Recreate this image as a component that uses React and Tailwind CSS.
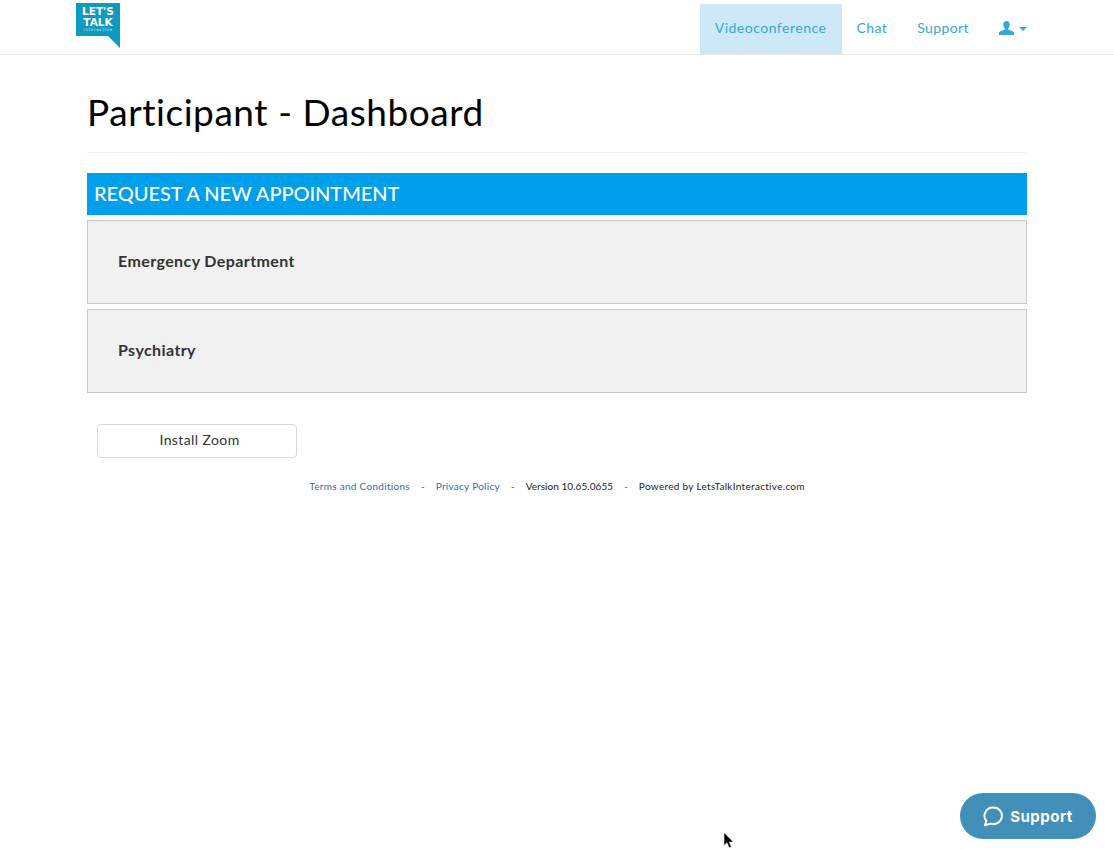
const font = { fontFamily: 'Lato, "Noto Sans", sans-serif' };

function Logo() {
  return (
    <div className="relative w-[44px] h-[45px] mt-[3px] ml-[76px]">
      <svg className="absolute inset-0" width="44" height="45" viewBox="0 0 44 45">
        <path d="M0 0H44V45L32 33H0Z" fill="#0f9abf" />
      </svg>
      <div className="absolute left-0 right-0 top-[3px] flex flex-col items-center text-white font-bold text-[10.500px] leading-[10.500px]" style={{ fontFamily: '"DejaVu Sans", sans-serif' }}>
        <span className="block h-[10.500px]">LET'S</span>
        <span className="block h-[10.500px]">TALK</span>
        <span className="text-[4px] leading-[5px] font-normal tracking-[0.7px] text-[#cfeaf3]">interactive</span>
      </div>
    </div>
  );
}

function Panel({ children }) {
  return (
    <div className="h-[84px] bg-[#f1f1f1] border border-[#c8c8c8] flex items-center pl-[30px] pb-[2px] text-[16px] font-bold tracking-[0.4px] text-[#333333]">
      {children}
    </div>
  );
}

export default function App() {
  return (
    <div className="relative min-h-[849px] bg-white overflow-hidden" style={font}>
      <nav className="h-[55px] border-b border-[#e7e7e7] flex justify-between">
        <Logo />
        <div className="flex items-end pr-[87px] text-[14px] tracking-[0.4px] text-[#36a6dc]">
          <a className="h-[50px] w-[142px] bg-[#cde9f7] flex items-center justify-center pb-[3px] tracking-[0.5px]">Videoconference</a>
          <a className="h-[50px] px-[15px] flex items-center pb-[3px]">Chat</a>
          <a className="h-[50px] px-[15px] flex items-center pb-[3px]">Support</a>
          <a className="h-[50px] pl-[15px] flex items-center gap-[5px]">
            <svg width="15" height="15" viewBox="0 0 15 15" className="mb-[2px]">
              <path d="M7.5 0C5.4 0 4.2 1.5 4.2 3.6c0 1.5.6 2.9 1.6 3.7v1.2L.9 10.6C.2 11 0 11.6 0 12.3V14h15v-1.700c0-.7-.2-1.300-.9-1.700L9.200 8.500V7.300c1-.8 1.600-2.200 1.600-3.700C10.800 1.500 9.600 0 7.500 0Z" fill="#36a6dc" />
            </svg>
            <svg width="8" height="4" viewBox="0 0 8 4">
              <path d="M0 0H8L4 4Z" fill="#36a6dc" />
            </svg>
          </a>
        </div>
      </nav>

      <main className="mx-[87px] w-[940px]">
        <h1 className="h-[98px] pt-[32px] text-[37px] tracking-[0.56px] leading-[50px] text-black border-b border-[#eeeeee]">
          Participant - Dashboard
        </h1>
        <h2 className="mt-[20px] h-[42px] bg-[#009fec] text-white text-[20px] font-medium tracking-[-0.05px] flex items-center pl-[7px] pb-[3px]">
          REQUEST A NEW APPOINTMENT
        </h2>
        <div className="mt-[5px] flex flex-col gap-[5px]">
          <Panel>Emergency Department</Panel>
          <Panel>Psychiatry</Panel>
        </div>
        <button className="mt-[31px] ml-[10px] block w-[200px] h-[34px] rounded-[4px] border border-[#d9d9d9] bg-white text-[14px] tracking-[0.4px] text-[#333333] pl-[5px] pb-[3px]">
          Install Zoom
        </button>
        <footer className="mt-[21px] flex justify-center text-[10px] leading-[14px] text-[#222222]">
          <a className="text-[#1f6fb5] tracking-[0.3px]">Terms and Conditions</a>
          <span className="mx-[11px] text-[#555555]">-</span>
          <a className="text-[#1f6fb5] tracking-[0.28px]">Privacy Policy</a>
          <span className="mx-[11px] text-[#555555]">-</span>
          <span className="tracking-[0.05px]">Version 10.65.0655</span>
          <span className="mx-[11px] text-[#555555]">-</span>
          <span className="tracking-[0.3px]">Powered by LetsTalkInteractive.com</span>
        </footer>
      </main>

      <button className="absolute left-[960px] top-[793px] w-[136px] h-[46px] rounded-full bg-[#428fb9] text-white flex items-center justify-center gap-[7px] text-[15px] font-bold tracking-[0.5px]" style={{ fontFamily: 'Inter, sans-serif' }}>
        <svg width="20" height="21" viewBox="0 0 20 21" fill="none">
          <path d="M10.500 1.500a8.300 8.300 0 1 1-2.700 16.100L1.800 19.300l1.600-4.300A8.300 8.300 0 0 1 10.500 1.500Z" stroke="white" strokeWidth="2" strokeLinejoin="round" />
        </svg>
        <span className="pt-[2px]">Support</span>
      </button>

      <svg className="absolute left-[723px] top-[832px]" width="12" height="18" viewBox="0 0 12 18">
        <path d="M1 0.500V13.500L4 10.700L6.200 15.700L8.300 14.800L6.200 10H10.300Z" fill="black" stroke="white" strokeWidth="0.500" />
      </svg>
    </div>
  );
}
